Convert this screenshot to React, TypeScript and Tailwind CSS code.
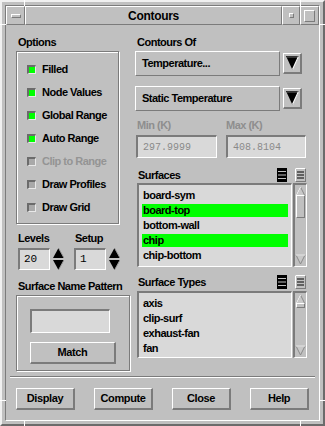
import React from 'react';

const FONT = "font-['Liberation_Sans',Arial,sans-serif]";
const MONO = "font-['Liberation_Mono','Courier_New',monospace]";

const raised = 'border-t border-l border-b-2 border-r-2 border-t-white border-l-white border-b-[#7b7b7b] border-r-[#7b7b7b]';
const raisedThin = 'border border-t-white border-l-white border-b-[#7b7b7b] border-r-[#7b7b7b]';
const sunken = 'border-t-2 border-l-2 border-b border-r border-t-[#7b7b7b] border-l-[#7b7b7b] border-b-white border-r-white';
const etched = 'border border-[#7b7b7b] shadow-[inset_1px_1px_0_white,1px_1px_0_white]';

const Label = ({ children, className = '' }: { children: React.ReactNode; className?: string }) => (
  <div className={`h-[13px] pl-[2px] text-[11px] leading-[13px] font-bold tracking-[-0.5px] text-black ${className}`}>{children}</div>
);

const Check = ({ label, on, disabled }: { label: string; on?: boolean; disabled?: boolean }) => (
  <div className="flex h-[23px] items-center">
    <div
      className={`h-[9px] w-[9px] border-t-2 border-l-2 border-b border-r border-t-[#6b6b6b] border-l-[#6b6b6b] border-b-[#e8e8e8] border-r-[#e8e8e8] ${
        on ? 'bg-[#00ff00]' : 'bg-[#a9a9a9]'
      }`}
    />
    <span className={`ml-[6px] text-[11px] font-bold tracking-[-0.5px] ${disabled ? 'text-[#949494]' : 'text-black'}`}>{label}</span>
  </div>
);

const DownArrowBtn = () => (
  <div className={`ml-[3px] flex h-[21px] w-[19px] items-center justify-center bg-[#c0c0c0] ${raised}`}>
    <svg width="13" height="14" viewBox="0 0 13 14">
      <polygon points="0,0 13,0 6.5,14" fill="#000" />
      <line x1="1" y1="1" x2="12" y2="1" stroke="#6a6a6a" strokeWidth="1" />
      <line x1="12.5" y1="0.5" x2="6.5" y2="13.5" stroke="#fff" strokeWidth="1.2" />
    </svg>
  </div>
);

const Spinner = () => (
  <svg width="11" height="22" viewBox="0 0 11 22" className="ml-[3px]">
    <polygon points="5.5,0 11,10 0,10" fill="#000" />
    <line x1="5.5" y1="0" x2="11" y2="10" stroke="#9a9a9a" strokeWidth="1" />
    <polygon points="0,12 11,12 5.5,22" fill="#000" />
    <line x1="11" y1="12" x2="5.5" y2="22" stroke="#9a9a9a" strokeWidth="1" />
  </svg>
);

const ListIcons = () => (
  <div className="ml-auto mr-[1px] flex items-center gap-[8px]">
    <svg width="10" height="14" viewBox="0 0 10 14">
      <rect x="0" y="0" width="10" height="14" fill="#000" />
      <line x1="1" y1="3.5" x2="9" y2="3.5" stroke="#c0c0c0" />
      <line x1="1" y1="7" x2="9" y2="7" stroke="#c0c0c0" />
      <line x1="1" y1="10.5" x2="9" y2="10.5" stroke="#c0c0c0" />
    </svg>
    <svg width="11" height="14" viewBox="0 0 11 14">
      <rect x="0.5" y="0.5" width="10" height="13" fill="#c0c0c0" stroke="#7b7b7b" />
      <line x1="0.5" y1="0.5" x2="10.5" y2="0.5" stroke="#fff" />
      <line x1="0.5" y1="0.5" x2="0.5" y2="13.5" stroke="#fff" />
      <line x1="2" y1="4" x2="9" y2="4" stroke="#000" />
      <line x1="2" y1="7" x2="9" y2="7" stroke="#000" />
      <line x1="2" y1="10" x2="9" y2="10" stroke="#000" />
    </svg>
  </div>
);

const ScrollBar = ({ h, thumbTop, thumbH }: { h: number; thumbTop: number; thumbH: number }) => (
  <div className={`relative w-[14px] bg-[#c0c0c0] ${sunken}`} style={{ height: h }}>
    <svg width="11" height="11" viewBox="0 0 11 11" className="absolute left-0 top-[1px]">
      <polygon points="5.5,1 10,10 1,10" fill="#c8c8c8" stroke="#8a8a8a" />
      <line x1="5.5" y1="1" x2="1" y2="10" stroke="#fff" />
    </svg>
    <div className={`absolute left-[1px] w-[9px] bg-[#c0c0c0] ${raisedThin}`} style={{ top: thumbTop, height: thumbH }} />
    <svg width="11" height="11" viewBox="0 0 11 11" className="absolute bottom-[1px] left-0">
      <polygon points="1,1 10,1 5.5,10" fill="#c8c8c8" stroke="#8a8a8a" />
      <line x1="1" y1="1" x2="10" y2="1" stroke="#fff" />
    </svg>
  </div>
);

const List = ({ items, sel, h, thumbTop, thumbH }: { items: string[]; sel: string[]; h: number; thumbTop: number; thumbH: number }) => (
  <div className="ml-[2px] flex">
    <div className={`w-[156px] bg-[#d9d9d9] pt-[3px] ${sunken}`} style={{ height: h }}>
      {items.map((it) => (
        <div key={it} className="flex h-[15px] items-center">
          <div
            className={`ml-[3px] h-[13px] w-[146px] pl-[1px] text-[11px] font-bold leading-[13px] tracking-[-0.5px] text-black ${
              sel.includes(it) ? 'bg-[#00ff00]' : ''
            }`}
          >
            {it}
          </div>
        </div>
      ))}
    </div>
    <div className="ml-[1px]">
      <ScrollBar h={h} thumbTop={thumbTop} thumbH={thumbH} />
    </div>
  </div>
);

const Button = ({ children, w }: { children: React.ReactNode; w: number }) => (
  <div
    className={`flex h-[22px] items-center justify-center bg-[#c0c0c0] text-[11px] font-bold tracking-[-0.4px] text-black ${raised}`}
    style={{ width: w }}
  >
    {children}
  </div>
);

export default function App() {
  return (
    <div className={`relative h-[426px] w-[325px] overflow-hidden bg-[#c0c0c0] ${FONT}`}>
      <div className="h-full w-full border-2 border-t-[#f0f0f0] border-l-[#f0f0f0] border-b-[#6b6b6b] border-r-[#6b6b6b] p-[3px]">
        <div className="flex h-full w-full flex-col border border-t-[#7b7b7b] border-l-[#7b7b7b] border-b-white border-r-white">
          {/* title bar */}
          <div className="flex h-[19px] shrink-0">
            <div className={`flex w-[19px] items-center justify-center ${raisedThin}`}>
              <div className={`h-[4px] w-[10px] ${raisedThin}`} />
            </div>
            <div className={`flex flex-1 items-center justify-center text-[12px] font-bold tracking-[-0.3px] text-black ${raisedThin}`}>
              Contours
            </div>
            <div className={`flex w-[18px] items-center justify-center ${raisedThin}`}>
              <div className={`h-[5px] w-[5px] ${raisedThin}`} />
            </div>
            <div className={`flex w-[19px] items-center justify-center ${raisedThin}`}>
              <div className={`h-[12px] w-[11px] ${raisedThin}`} />
            </div>
          </div>

          {/* body */}
          <div className="flex flex-1 flex-col pt-[11px]">
            <div className="flex">
              {/* left column */}
              <div className="ml-[10px] w-[114px]">
                <Label>Options</Label>
                <div className={`mt-[2px] h-[173px] w-[103px] pl-[10px] pt-[6px] ${etched}`}>
                  <Check label="Filled" on />
                  <Check label="Node Values" on />
                  <Check label="Global Range" on />
                  <Check label="Auto Range" on />
                  <Check label="Clip to Range" disabled />
                  <Check label="Draw Profiles" />
                  <Check label="Draw Grid" />
                </div>

                <div className="mt-[8px] flex h-[13px]">
                  <Label className="w-[57px]">Levels</Label>
                  <Label>Setup</Label>
                </div>
                <div className="mt-[3px] flex">
                  <div className={`ml-[2px] flex h-[22px] w-[32px] items-center bg-[#d9d9d9] pl-[4px] text-[11px] text-black ${sunken} ${MONO}`}>20</div>
                  <Spinner />
                  <div className={`ml-[10px] flex h-[22px] w-[32px] items-center bg-[#d9d9d9] pl-[4px] text-[11px] text-black ${sunken} ${MONO}`}>1</div>
                  <Spinner />
                </div>

                <Label className="mt-[10px]">Surface Name Pattern</Label>
                <div className={`mt-[2px] h-[76px] w-[114px] pl-[13px] pt-[13px] ${etched}`}>
                  <div className={`h-[24px] w-[80px] bg-[#d9d9d9] ${sunken}`} />
                  <div className="mt-[9px]">
                    <Button w={86}>
                      <span className="text-[11px]">Match</span>
                    </Button>
                  </div>
                </div>
              </div>

              {/* right column */}
              <div className="ml-[5px] w-[172px]">
                <Label>Contours Of</Label>
                <div className="mt-[2px] flex items-center">
                  <div className={`flex h-[25px] w-[145px] items-center bg-[#c0c0c0] pl-[6px] text-[11px] font-bold tracking-[-0.5px] text-black ${raisedThin}`}>
                    Temperature...
                  </div>
                  <DownArrowBtn />
                </div>
                <div className="mt-[10px] flex items-center">
                  <div className={`flex h-[25px] w-[145px] items-center bg-[#c0c0c0] pl-[6px] text-[11px] font-bold tracking-[-0.5px] text-black ${raisedThin}`}>
                    Static Temperature
                  </div>
                  <DownArrowBtn />
                </div>

                <div className="mt-[8px] flex h-[13px] font-bold text-[#8e8e8e]">
                  <div className="w-[91px] pl-[2px] text-[11px] leading-[13px] tracking-[-0.5px]">Min (K)</div>
                  <div className="text-[11px] leading-[13px] tracking-[-0.5px]">Max (K)</div>
                </div>
                <div className="mt-[3px] flex">
                  <div className={`ml-[1px] flex h-[23px] w-[81px] items-center bg-[#d9d9d9] pl-[5px] text-[10px] text-[#8a8a8a] ${sunken} ${MONO}`}>297.9999</div>
                  <div className={`ml-[9px] flex h-[23px] w-[80px] items-center bg-[#d9d9d9] pl-[5px] text-[10px] text-[#8a8a8a] ${sunken} ${MONO}`}>408.8104</div>
                </div>

                <div className="mt-[9px] flex h-[16px] items-center">
                  <Label className="ml-[1px]">Surfaces</Label>
                  <ListIcons />
                </div>
                <List
                  items={['board-sym', 'board-top', 'bottom-wall', 'chip', 'chip-bottom']}
                  sel={['board-top', 'chip']}
                  h={84}
                  thumbTop={10}
                  thumbH={23}
                />

                <div className="mt-[7px] flex h-[16px] items-center">
                  <Label className="ml-[1px]">Surface Types</Label>
                  <ListIcons />
                </div>
                <div className="mt-[1px]">
                  <List items={['axis', 'clip-surf', 'exhaust-fan', 'fan']} sel={[]} h={67} thumbTop={10} thumbH={5} />
                </div>
              </div>
            </div>

            {/* separator */}
            <div className="ml-[4px] mt-[5px] h-[2px] w-[305px] border-t border-b border-t-[#7b7b7b] border-b-white" />

            {/* buttons */}
            <div className="ml-[10px] mt-[10px] flex gap-[19px]">
              <Button w={59}>Display</Button>
              <Button w={59}>Compute</Button>
              <Button w={59}>Close</Button>
              <Button w={59}>Help</Button>
            </div>
          </div>
        </div>
      </div>

      {/* frame corner ticks */}
      <div className="absolute left-[24px] top-0 h-[6px] w-[1px] bg-white" />
      <div className="absolute left-[300px] top-0 h-[6px] w-[1px] bg-white" />
      <div className="absolute left-0 top-[24px] h-[1px] w-[6px] bg-white" />
      <div className="absolute right-0 top-[24px] h-[1px] w-[6px] bg-white" />
      <div className="absolute left-0 top-[400px] h-[1px] w-[6px] bg-white" />
      <div className="absolute right-0 top-[400px] h-[1px] w-[6px] bg-white" />
      <div className="absolute bottom-0 left-[24px] h-[6px] w-[1px] bg-white" />
      <div className="absolute bottom-0 left-[300px] h-[6px] w-[1px] bg-white" />
    </div>
  );
}
